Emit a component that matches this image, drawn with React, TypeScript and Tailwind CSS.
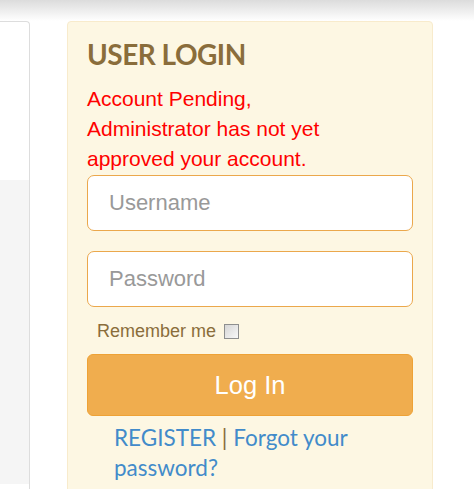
import React from 'react';

export default function App() {
  return (
    <div className="w-[474px] h-[489px] overflow-hidden bg-white relative">
      <div className="h-[21px] bg-gradient-to-b from-[#dcdcdc] to-white" />
      <div className="flex gap-[37px] items-start">
        <LeftPanel />
        <LoginCard />
      </div>
    </div>
  );
}

function LeftPanel() {
  return (
    <div className="w-[30px] h-[480px] border-t border-r border-[#dddddd] rounded-tr-[4px] bg-white flex flex-col">
      <div className="h-[158px]" />
      <div className="h-[304px] bg-[#f5f5f5]" />
    </div>
  );
}

function LoginCard() {
  return (
    <div
      className="w-[366px] h-[480px] bg-[#fdf7e3] border border-[#f8ebcc] rounded-[4px] px-[19px] pt-[16px]"
      style={{ fontFamily: '"Liberation Sans", Arial, sans-serif' }}
    >
      <h2
        className="text-[28px] leading-[33px] font-bold tracking-[-0.5px] text-[#8a6d3b]"
        style={{ fontFamily: 'Lato, sans-serif' }}
      >
        USER LOGIN
      </h2>
      <p className="mt-[13px] text-[21px] leading-[30px] text-[#ff0000]">
        Account Pending,
        <br />
        Administrator has not yet
        <br />
        approved your account.
      </p>
      <input
        type="text"
        placeholder="Username"
        className="mt-px block w-full h-[56px] border border-[#eba84c] rounded-[7px] bg-white px-[21px] text-[22px] text-[#555] placeholder:text-[#999] outline-none"
      />
      <input
        type="password"
        placeholder="Password"
        className="mt-[20px] block w-full h-[56px] border border-[#eba84c] rounded-[7px] bg-white px-[21px] text-[22px] text-[#555] placeholder:text-[#999] outline-none"
      />
      <div className="mt-[13px] h-[22px] pl-[10px] flex items-center gap-[8px] text-[18px] leading-[22px] text-[#8a6d3b]">
        <span>Remember me</span>
        <span className="w-[15px] h-[15px] border border-[#8e8f8f] bg-gradient-to-br from-[#d6d6d6] to-[#f8f8f8]" />
      </div>
      <button className="mt-[12px] w-full h-[62px] rounded-[6px] bg-[#f0ad4e] border border-[#eea236] flex items-center justify-center text-white text-[25.5px]">
        Log In
      </button>
      <div
        className="mt-[7px] pl-[27px] text-[22.5px] leading-[30px] text-[#428bca]"
        style={{ fontFamily: 'Lato, sans-serif' }}
      >
        <a>REGISTER</a> <span className="text-[#8a6d3b]">|</span> <a>Forgot your password?</a>
      </div>
    </div>
  );
}
